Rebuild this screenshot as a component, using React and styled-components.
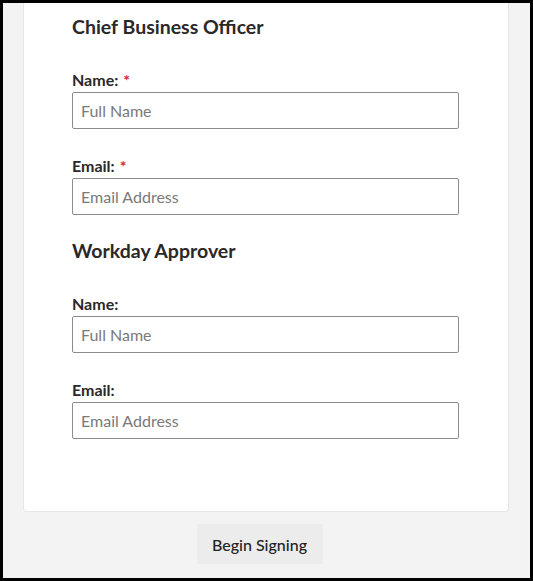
import React from "react";
import styled, { createGlobalStyle } from "styled-components";

const GlobalStyle = createGlobalStyle`
  html, body { margin: 0; padding: 0; }
  body { font-family: Lato, "Open Sans", "Liberation Sans", sans-serif; }
  * { box-sizing: border-box; }
`;

const Frame = styled.div`
  height: 581px;
  border: 3px solid #000;
  background: #f3f3f3;
  display: flex;
  flex-direction: column;
  overflow: hidden;
`;

const Card = styled.div`
  margin: 0 21px 0 20px;
  background: #fff;
  border: 1px solid #e6e6e6;
  border-top: none;
  border-radius: 0 0 4px 4px;
  padding: 12px 49px 72px 48px;
  display: flex;
  flex-direction: column;
`;

const SectionTitle = styled.h2`
  margin: 0 0 31px;
  font-size: 19.5px;
  line-height: 24px;
  font-weight: 700;
  color: #2b2828;
`;

const Section = styled.section`
  display: flex;
  flex-direction: column;
  & + & { margin-top: 24px; }
`;

const Field = styled.div`
  display: flex;
  flex-direction: column;
  gap: 2px;
  & + & { margin-top: 27px; }
`;

const Label = styled.label`
  font-size: 16px;
  line-height: 20px;
  font-weight: 700;
  color: #2b2828;
`;

const Req = styled.span`
  color: #d4203a;
  margin-left: 5px;
`;

const Input = styled.input`
  width: 100%;
  height: 37px;
  border: 1px solid #8c8c8c;
  border-radius: 2px;
  padding: 0 8px;
  font-family: inherit;
  font-size: 16px;
  color: #333;
  background: #fff;
  outline: none;
  &::placeholder { color: #7a7a7a; }
`;

const Footer = styled.div`
  display: flex;
  justify-content: center;
  padding: 12px 14px 0 0;
`;

const Button = styled.button`
  width: 126px;
  height: 40px;
  border: none;
  border-radius: 2px;
  background: #ececec;
  color: #222;
  font-family: inherit;
  font-size: 16px;
  font-weight: 500;
  cursor: pointer;
`;

const sections = [
  { title: "Chief Business Officer", required: true },
  { title: "Workday Approver", required: false },
];

export default function App() {
  return (
    <>
      <GlobalStyle />
      <Frame>
        <Card>
          {sections.map((s) => (
            <Section key={s.title}>
              <SectionTitle>{s.title}</SectionTitle>
              <Field>
                <Label>
                  Name:{s.required && <Req>*</Req>}
                </Label>
                <Input type="text" placeholder="Full Name" />
              </Field>
              <Field>
                <Label>
                  Email:{s.required && <Req>*</Req>}
                </Label>
                <Input type="email" placeholder="Email Address" />
              </Field>
            </Section>
          ))}
        </Card>
        <Footer>
          <Button>Begin Signing</Button>
        </Footer>
      </Frame>
    </>
  );
}
